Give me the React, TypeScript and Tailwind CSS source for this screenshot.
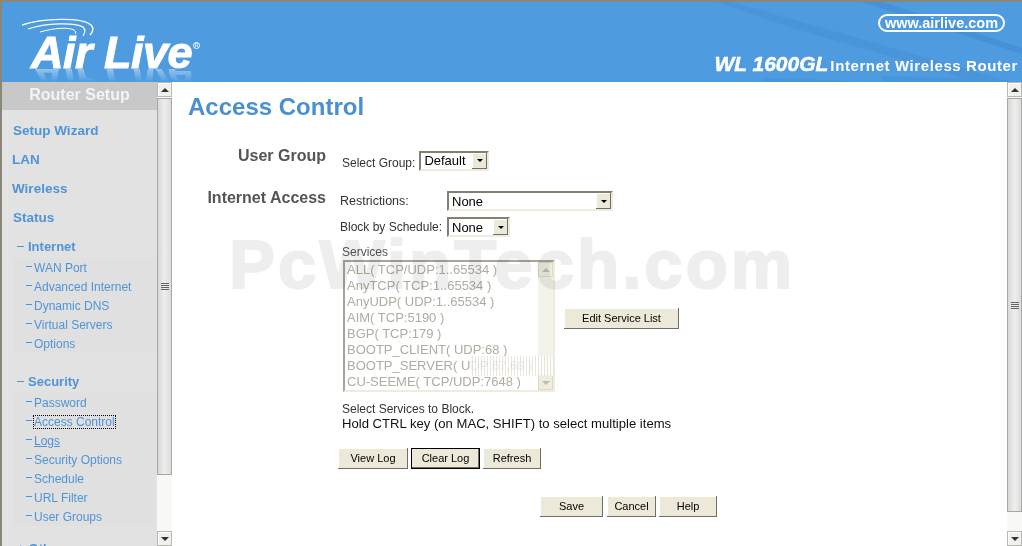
import React from 'react'

const internetItems = ['WAN Port', 'Advanced Internet', 'Dynamic DNS', 'Virtual Servers', 'Options']
const securityItems = ['Password', 'Access Control', 'Logs', 'Security Options', 'Schedule', 'URL Filter', 'User Groups']
const services = [
  'ALL( TCP/UDP:1..65534 )',
  'AnyTCP( TCP:1..65534 )',
  'AnyUDP( UDP:1..65534 )',
  'AIM( TCP:5190 )',
  'BGP( TCP:179 )',
  'BOOTP_CLIENT( UDP:68 )',
  'BOOTP_SERVER( UDP:67,68 )',
  'CU-SEEME( TCP/UDP:7648 )',
]

const ScrollButton = ({ down }: { down?: boolean }) => (
  <div className="flex h-[15px] w-[15px] shrink-0 items-center justify-center border border-[#b8b8b0] bg-[#f0f0ec] shadow-[inset_1px_1px_0_#fff]">
    <div
      className={
        down
          ? 'h-0 w-0 border-x-[4px] border-t-[4px] border-x-transparent border-t-[#333]'
          : 'h-0 w-0 border-x-[4px] border-b-[4px] border-x-transparent border-b-[#333]'
      }
    />
  </div>
)

const Scrollbar = ({ thumb }: { thumb: string }) => (
  <div className="flex w-[15px] shrink-0 flex-col bg-[#f8f8f4]">
    <ScrollButton />
    <div className="flex-1 pt-px">
      <div
        className={[
          'flex items-center justify-center border border-[#a8a8a0] bg-gradient-to-r from-[#d8d8d8] via-[#eeeeee] to-[#dcdcdc]',
          thumb,
        ].join(' ')}
      >
        <div className="flex w-[8px] flex-col gap-px">
          <div className="h-px bg-[#666]" />
          <div className="h-px bg-[#666]" />
          <div className="h-px bg-[#666]" />
          <div className="h-px bg-[#666]" />
        </div>
      </div>
    </div>
    <ScrollButton down />
  </div>
)

const Dropdown = ({ value, width }: { value: string; width: string }) => (
  <div
    className={[
      'flex h-[20px] shrink-0 items-center justify-between border-2 border-[#857f70] border-r-[#efebdd] border-b-[#efebdd] bg-white pl-[3px] text-[13px] leading-none text-black',
      width,
    ].join(' ')}
  >
    <span>{value}</span>
    <div className="flex h-[16px] w-[15px] items-center justify-center bg-[#ece9d8] shadow-[inset_-1px_-1px_0_#716f64,inset_1px_1px_0_#fff]">
      <div className="h-0 w-0 border-x-[3px] border-t-[3px] border-x-transparent border-t-black" />
    </div>
  </div>
)

const Btn = ({ label, width, focused }: { label: string; width: string; focused?: boolean }) => (
  <div
    className={[
      'flex h-[21px] shrink-0 items-center justify-center bg-[#ece9d8] text-[11px] leading-none text-black',
      focused
        ? 'border border-black shadow-[inset_-1px_-1px_0_#716f64]'
        : 'shadow-[inset_-1px_-1px_0_#716f64,inset_1px_1px_0_#fff]',
      width,
    ].join(' ')}
  >
    {label}
  </div>
)

const SubItem = ({ label }: { label: string }) => (
  <div className="flex h-[19px] items-center text-[12px] leading-none text-[#4f94d8]">
    <div className="mb-[3px] mr-[2px] h-px w-[6px] bg-[#4f94d8]" />
    <span
      className={[
        label === 'Access Control' ? 'outline-1 outline-dotted outline-black' : '',
        label === 'Logs' ? 'underline' : '',
      ].join(' ')}
    >
      {label}
    </span>
  </div>
)

const Section = ({ label, items }: { label: string; items: string[] }) => (
  <div>
    <div className="flex h-[23px] items-center pb-px pl-[15px] text-[13px] font-bold leading-none text-[#4f94d8]">
      <div className="mr-[4px] h-px w-[7px] bg-[#4f94d8]" />
      {label}
    </div>
    <div className="ml-[12px] mr-[2px] bg-[#e0e0e0] pl-[12px]">
      {items.map((item) => (
        <SubItem key={item} label={item} />
      ))}
    </div>
  </div>
)

const Header = () => (
  <div className="relative flex h-[80px] shrink-0 justify-between overflow-hidden bg-[#4f9be0]">
    <svg className="absolute inset-0 h-full w-full" viewBox="0 0 1020 80" fill="none">
      <path d="M730 0 L960 66 L1010 80 L975 80 L790 26 L715 0 Z" fill="#4a94da" />
      <path d="M880 0 L1020 46 L1020 52 L860 0 Z" fill="#4691d8" />
      <path d="M760 76 L830 78 L850 80 L760 80 Z" fill="#4a94da" />
      <path d="M880 74 L960 76 L980 80 L880 80 Z" fill="#4a94da" />
    </svg>
    <div className="relative w-[210px]">
      <svg className="absolute left-[20px] top-[16px]" width="78" height="22" viewBox="0 0 78 22" fill="none">
        <path d="M0 7 C20 0 60 -1 69 7 C72 10 71 14 68 17" stroke="#fff" strokeWidth="1.4" />
        <path d="M6 11 C24 5 52 4 61 9 C64 12 63 15 61 18" stroke="#fff" strokeWidth="1.2" />
        <path d="M18 14 C32 10 46 9 52 12 C54 13 54 15 53 16" stroke="#fff" strokeWidth="1" />
      </svg>
      <div className="absolute left-[29px] top-[28px] whitespace-nowrap text-[45px] font-bold italic leading-[45px] tracking-[-0.5px] text-white [-webkit-text-stroke:1px_white]">
        Air Live
      </div>
      <div className="absolute left-[29px] top-[67px] h-[13px] w-[170px] overflow-hidden opacity-40 [mask-image:linear-gradient(to_bottom,black,transparent)]">
        <div className="-scale-y-100 whitespace-nowrap text-[45px] font-bold italic leading-[13px] tracking-[-0.5px] text-white">
          Air Live
        </div>
      </div>
      <div className="absolute left-[191px] top-[40px] flex h-[7px] w-[7px] items-center justify-center rounded-full border border-white text-[5px] leading-none text-white">
        R
      </div>
    </div>
    <div className="relative flex flex-col items-end pr-[4px] pt-[12px]">
      <div className="mr-[13px] flex h-[18px] w-[127px] items-center justify-center rounded-full border-2 border-white text-[14.5px] font-bold leading-none text-white">
        www.airlive.com
      </div>
      <div className="mt-[21px] flex items-baseline whitespace-nowrap text-white">
        <span className="text-[21px] font-bold italic leading-none [-webkit-text-stroke:0.5px_white]">WL 1600GL</span>
        <span className="ml-[2px] text-[15px] font-bold leading-none tracking-[0.6px]">Internet Wireless Router</span>
      </div>
    </div>
  </div>
)

const Sidebar = () => (
  <div className="flex w-[155px] shrink-0 flex-col overflow-hidden bg-[#e2e2e2]">
    <div className="flex h-[28px] shrink-0 items-start justify-center bg-[#c8c8c8] pt-[4px] text-[16px] font-bold leading-[18px] text-[#f4f4f4]">
      Router Setup
    </div>
    <div className="flex flex-col pl-[10px] pt-[6px] text-[13.5px] font-bold leading-[29px] text-[#4f94d8]">
      <div className="ml-px">Setup Wizard</div>
      <div>LAN</div>
      <div>Wireless</div>
      <div className="ml-px">Status</div>
    </div>
    <div className="pt-[3px]">
      <Section label="Internet" items={internetItems} />
    </div>
    <div className="pt-[17px]">
      <Section label="Security" items={securityItems} />
    </div>
    <div className="flex h-[24px] shrink-0 items-center pl-[15px] pt-[20px] text-[13px] font-bold leading-none text-[#4f94d8]">
      <span className="mr-[4px]">+</span>Other
    </div>
  </div>
)

const Main = () => (
  <div className="relative min-w-0 flex-1 overflow-hidden bg-white">
    <div className="pl-[16px] pt-[9px] text-[24px] font-bold leading-[32px] text-[#4a90d0]">Access Control</div>

    <div className="mt-[27px] flex h-[21px] items-center">
      <div className="w-[154px] pb-[10px] text-right text-[16px] font-bold leading-none text-[#555]">User Group</div>
      <div className="ml-[16px] flex items-center">
        <span className="mr-[4px] pt-[5px] text-[12px] leading-none text-[#333]">Select Group:</span>
        <Dropdown value="Default" width="w-[70px]" />
      </div>
    </div>

    <div className="mt-[19px] flex">
      <div className="w-[154px] text-right text-[16px] font-bold leading-[16px] text-[#555]">Internet Access</div>
      <div className="ml-[14px] mt-px flex flex-col">
        <div className="flex items-center">
          <span className="w-[107px] text-[12.5px] leading-none text-[#333]">Restrictions:</span>
          <Dropdown value="None" width="w-[166px]" />
        </div>
        <div className="mt-[6px] flex items-center">
          <span className="w-[107px] text-[12px] leading-none text-[#333]">Block by Schedule:</span>
          <Dropdown value="None" width="w-[63px]" />
        </div>
        <div className="ml-[2px] mt-[8px] text-[12px] leading-[15px] text-[#555]">Services</div>
        <div className="flex items-center">
          <div className="ml-[3px] flex h-[132px] w-[212px] shrink-0 border-2 border-[#a8a498] border-r-[#efebdd] border-b-[#efebdd] bg-white/40">
            <div className="flex-1 overflow-hidden pl-[2px] text-[13px] leading-[16px] text-[#b0ac9f]">
              {services.map((s) => (
                <div key={s} className="h-[16px] whitespace-nowrap">
                  {s}
                </div>
              ))}
            </div>
            <div className="flex w-[15px] shrink-0 flex-col justify-between bg-[#f4f3ea]">
              <div className="flex h-[15px] items-center justify-center border border-[#dcd9c9] bg-[#ece9d8]/60">
                <div className="h-0 w-0 border-x-[4px] border-b-[4px] border-x-transparent border-b-[#c0bdb0]" />
              </div>
              <div className="flex h-[15px] items-center justify-center border border-[#dcd9c9] bg-[#ece9d8]/60">
                <div className="h-0 w-0 border-x-[4px] border-t-[4px] border-x-transparent border-t-[#c0bdb0]" />
              </div>
            </div>
          </div>
          <div className="ml-[9px] mb-[15px]">
            <Btn label="Edit Service List" width="w-[115px]" />
          </div>
        </div>
        <div className="ml-[2px] mt-[10px] text-[12px] leading-[14px] text-[#333]">Select Services to Block.</div>
        <div className="ml-[2px] text-[13.1px] leading-[16px] text-[#111]">
          Hold CTRL key (on MAC, SHIFT) to select multiple items
        </div>
        <div className="-ml-[2px] mt-[16px] flex gap-[3px]">
          <Btn label="View Log" width="w-[70px]" />
          <Btn label="Clear Log" width="w-[69px]" focused />
          <Btn label="Refresh" width="w-[58px]" />
        </div>
        <div className="ml-[200px] mt-[27px] flex gap-[3px]">
          <div className="mr-px">
            <Btn label="Save" width="w-[63px]" />
          </div>
          <Btn label="Cancel" width="w-[49px]" />
          <Btn label="Help" width="w-[58px]" />
        </div>
      </div>
    </div>

    {/* watermark sits over the form */}
    <div className="pointer-events-none absolute left-[57px] top-[148px] whitespace-nowrap text-[69px] font-bold leading-none tracking-[3px] text-[#eeeeee] mix-blend-multiply [-webkit-text-stroke:2px_#eeeeee]">
      PcWinTech.com
    </div>
    <div className="pointer-events-none absolute left-[298px] top-[274px] h-[20px] w-[84px] bg-[repeating-linear-gradient(90deg,#fff_0,#fff_2px,#e4e2d8_2px,#e4e2d8_3px)] opacity-80" />
  </div>
)

export default function App() {
  return (
    <div className="flex h-[546px] w-[1022px] flex-col overflow-hidden border-l-2 border-t-2 border-[#8a8678] bg-white font-['Liberation_Sans',Arial,sans-serif]">
      <Header />
      <div className="flex min-h-0 flex-1">
        <Sidebar />
        <Scrollbar thumb="h-[377px]" />
        <Main />
        <Scrollbar thumb="h-[414px]" />
      </div>
    </div>
  )
}
